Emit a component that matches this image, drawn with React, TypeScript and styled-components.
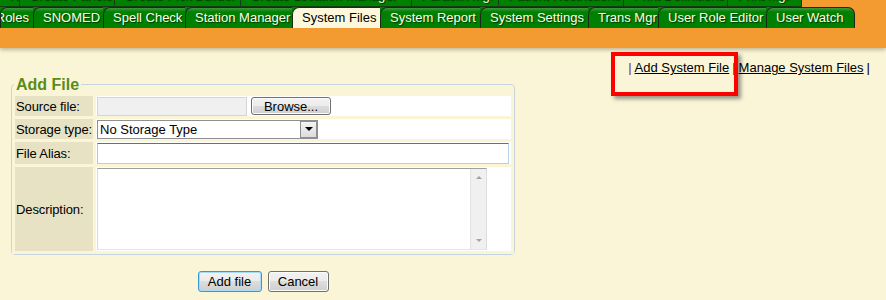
import React from "react";
import styled, { createGlobalStyle } from "styled-components";

const GlobalStyle = createGlobalStyle`
  html, body {
    margin: 0;
    padding: 0;
    background: #fbf5d8;
  }
  body {
    font-family: "Liberation Sans", Arial, sans-serif;
    font-size: 13px;
    color: #000;
  }
`;

const Header = styled.header`
  background: #f39a31;
  height: 48px;
  box-shadow: 0 2px 4px rgba(90, 70, 30, 0.35);
`;

const TopRow = styled.div`
  display: flex;
  align-items: flex-end;
  height: 7px;
  overflow: hidden;
`;

const TopTab = styled.div<{ $w: number }>`
  flex: 0 0 ${(p) => p.$w}px;
  box-sizing: border-box;
  height: 21px;
  padding-left: 9px;
  background: #008000;
  border-right: 1px solid #173c17;
  border-bottom: 1px solid #173c17;
  color: #ffffe6;
  line-height: 20px;
  white-space: nowrap;
  overflow: hidden;
  text-shadow: 1px 1px 1px rgba(0, 0, 0, 0.6);
`;

const TabRow = styled.nav`
  display: flex;
  height: 21px;
  background: linear-gradient(to right, #008000 0 802px, transparent 802px)
    top left / 100% 6px no-repeat;
`;

const Tab = styled.div<{ $w: number; $active?: boolean; $last?: boolean; $clip?: boolean }>`
  flex: 0 0 ${(p) => p.$w}px;
  box-sizing: border-box;
  padding: ${(p) => (p.$clip ? "0 4px 0 0" : "0 0 0 9px")};
  text-align: ${(p) => (p.$clip ? "right" : "left")};
  direction: ${(p) => (p.$clip ? "rtl" : "ltr")};
  border-top: 1px solid #1c2a1c;
  border-left: 1px solid #1c2a1c;
  border-right: ${(p) => (p.$last ? "1px solid #1c2a1c" : "none")};
  border-top-left-radius: 7px;
  border-top-right-radius: ${(p) => (p.$last ? "7px" : "0")};
  background: ${(p) =>
    p.$active ? "#fdf8dc" : "linear-gradient(#3f993f 0, #008000 4px)"};
  color: ${(p) => (p.$active ? "#000" : "#ffffe6")};
  text-shadow: ${(p) => (p.$active ? "none" : "1px 1px 1px rgba(0, 0, 0, 0.6)")};
  line-height: 20px;
  white-space: nowrap;
  overflow: hidden;
`;

const Main = styled.main`
  display: flex;
  flex-direction: column;
  padding: 0 13px 0 11px;
`;

const Links = styled.div`
  align-self: flex-end;
  margin-top: 12px;
  line-height: 16px;
  white-space: nowrap;
`;

const Pipe = styled.span<{ $c?: string }>`
  color: ${(p) => p.$c || "#000"};
  margin: 0 3px;
`;

const Highlight = styled.span`
  position: relative;
  display: inline-block;
`;

const RedBox = styled.span`
  position: absolute;
  left: -24px;
  top: -8px;
  width: 127px;
  height: 44px;
  box-sizing: border-box;
  border: 4px solid #ff0000;
  box-shadow: 3px 3px 4px rgba(0, 0, 0, 0.4);
  pointer-events: none;
`;

const Link = styled.a`
  color: #000;
  text-decoration: underline;
`;

const Fieldset = styled.fieldset`
  width: 504px;
  box-sizing: border-box;
  margin: 0;
  padding: 0;
  border: 1px solid #c6d4de;
  border-radius: 4px;
`;

const Legend = styled.legend`
  margin-left: 2px;
  padding: 0 2px;
  color: #5a8c18;
  font-weight: bold;
  font-size: 16px;
  line-height: 17px;
`;

const FormTable = styled.table`
  width: 100%;
  border-spacing: 3px;
  background: #fbf5d8;
`;

const Label = styled.td`
  width: 77px;
  padding: 0 0 0 1px;
  background: #e7e2c4;
  white-space: nowrap;
  vertical-align: middle;
  letter-spacing: -0.1px;
`;

const Value = styled.td<{ $h: number }>`
  height: ${(p) => p.$h}px;
  padding: 0 1px;
  background: #fff;
  vertical-align: middle;
`;

const Inline = styled.div`
  display: flex;
  align-items: center;
  gap: 4px;
`;

const TextInput = styled.input<{ $w: number; $disabled?: boolean }>`
  width: ${(p) => p.$w}px;
  height: ${(p) => (p.$disabled ? 19 : 21)}px;
  box-sizing: border-box;
  margin: 0;
  padding: 1px 3px;
  font: inherit;
  border: 1px solid;
  border-color: ${(p) =>
    p.$disabled ? "#d4d4d4" : "#3d7bad #b6d0e8 #b6d0e8 #a9c8e4"};
  background: ${(p) => (p.$disabled ? "#f0f0f0" : "#fff")};
  outline: none;
`;

const Button = styled.button<{ $w: number; $h?: number; $focus?: boolean }>`
  width: ${(p) => p.$w}px;
  height: ${(p) => p.$h || 21}px;
  box-sizing: border-box;
  margin: 0;
  padding: 0;
  font: inherit;
  font-size: 13px;
  color: #000;
  border: 1px solid ${(p) => (p.$focus ? "#3399dd" : "#707070")};
  border-radius: 3px;
  background: linear-gradient(#f2f2f2 0, #ebebeb 50%, #dddddd 50%, #cfcfcf 100%);
  box-shadow: ${(p) => (p.$focus ? "inset 0 0 0 1px #a8dcf6" : "inset 0 0 0 1px #fbfbfb")};
`;

const SelectWrap = styled.div`
  position: relative;
  width: 221px;
  height: 19px;
`;

const Select = styled.select`
  width: 100%;
  height: 100%;
  box-sizing: border-box;
  margin: 0;
  padding: 0 2px;
  font: inherit;
  border: 1px solid #8e8f8f;
  background: #fff;
  appearance: none;
  outline: none;
`;

const SelectArrow = styled.span`
  position: absolute;
  right: 1px;
  top: 1px;
  width: 17px;
  height: 17px;
  box-sizing: border-box;
  border: 1px solid #8e8f8f;
  background: linear-gradient(#f4f4f4, #dcdcdc);
  display: flex;
  align-items: center;
  justify-content: center;
  pointer-events: none;

  &::after {
    content: "";
    border-left: 4px solid transparent;
    border-right: 4px solid transparent;
    border-top: 4px solid #000;
  }
`;

const AreaWrap = styled.div`
  display: flex;
  width: 390px;
  height: 82px;
  box-sizing: border-box;
  border: 1px solid;
  border-color: #a0a0a0 #dcdde3 #e3e4ea #d8d9df;
`;

const TextArea = styled.textarea`
  flex: 1;
  margin: 0;
  padding: 2px;
  border: none;
  resize: none;
  font: inherit;
  outline: none;
`;

const ScrollBar = styled.div`
  flex: 0 0 16px;
  display: flex;
  flex-direction: column;
  justify-content: space-between;
  align-items: center;
  padding: 7px 0;
  box-sizing: border-box;
  background: #f0f0f0;
  border-left: 1px solid #e4e4e4;
`;

const Arrow = styled.span<{ $down?: boolean }>`
  width: 0;
  height: 0;
  border-left: 3px solid transparent;
  border-right: 3px solid transparent;
  ${(p) =>
    p.$down ? "border-top: 3px solid #a3a3a3;" : "border-bottom: 3px solid #a3a3a3;"}
`;

const Actions = styled.div`
  width: 504px;
  margin-top: 16px;
  display: flex;
  justify-content: center;
  gap: 6px;
`;

const topTabs: [string, number][] = [
  ["Roster", 20],
  ["Create Panels", 95],
  ["Create Pick Builder", 126],
  ["Create Location Manager", 171],
  ["Paraclin Mgr", 87],
  ["Patient Restrictions", 125],
  ["Print Definitions", 104],
  ["Print Mgr", 74],
];

const tabs: [string, number][] = [
  ["Roles", 33],
  ["SNOMED", 70],
  ["Spell Check", 82],
  ["Station Manager", 107],
  ["System Files", 88],
  ["System Report", 100],
  ["System Settings", 108],
  ["Trans Mgr", 70],
  ["User Role Editor", 108],
  ["User Watch", 89],
];

export default function App() {
  return (
    <>
      <GlobalStyle />
      <Header>
        <TopRow>
          {topTabs.map(([t, w]) => (
            <TopTab key={t} $w={w}>
              {t}
            </TopTab>
          ))}
        </TopRow>
        <TabRow>
          {tabs.map(([t, w], i) => (
            <Tab
              key={t}
              $w={w}
              $clip={i === 0}
              $active={t === "System Files"}
              $last={i === tabs.length - 1}
            >
              {t}
            </Tab>
          ))}
        </TabRow>
      </Header>
      <Main>
        <Links>
          <Pipe $c="#6e2a6e">|</Pipe>
          <Highlight>
            <Link href="#">Add System File</Link>
            <RedBox />
          </Highlight>
          <Pipe>|</Pipe>
          <Link href="#">Manage System Files</Link>
          <Pipe>|</Pipe>
        </Links>
        <Fieldset>
          <Legend>Add File</Legend>
          <FormTable>
            <tbody>
              <tr>
                <Label>Source file:</Label>
                <Value $h={20}>
                  <Inline>
                    <TextInput $w={150} $disabled readOnly />
                    <Button type="button" $w={80} $h={18}>
                      Browse...
                    </Button>
                  </Inline>
                </Value>
              </tr>
              <tr>
                <Label>Storage type:</Label>
                <Value $h={20}>
                  <SelectWrap>
                    <Select defaultValue="none">
                      <option value="none">No Storage Type</option>
                    </Select>
                    <SelectArrow />
                  </SelectWrap>
                </Value>
              </tr>
              <tr>
                <Label>File Alias:</Label>
                <Value $h={22}>
                  <TextInput $w={412} />
                </Value>
              </tr>
              <tr>
                <Label>Description:</Label>
                <Value $h={84}>
                  <AreaWrap>
                    <TextArea />
                    <ScrollBar>
                      <Arrow />
                      <Arrow $down />
                    </ScrollBar>
                  </AreaWrap>
                </Value>
              </tr>
            </tbody>
          </FormTable>
        </Fieldset>
        <Actions>
          <Button type="button" $w={64} $focus>
            Add file
          </Button>
          <Button type="button" $w={61}>
            Cancel
          </Button>
        </Actions>
      </Main>
    </>
  );
}
